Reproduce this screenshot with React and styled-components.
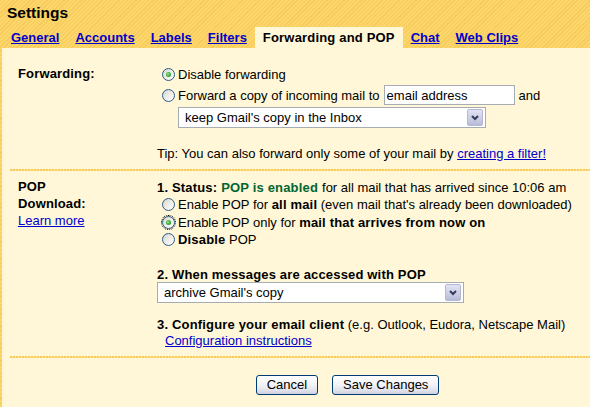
import React from 'react';
import styled, { createGlobalStyle, css } from 'styled-components';

const Global = createGlobalStyle`
  html, body { margin: 0; padding: 0; }
  body {
    font-family: "Liberation Sans", Arial, sans-serif;
    font-size: 13px;
    color: #000;
    overflow: hidden;
  }
`;

const Page = styled.div`
  min-height: 100vh;
  display: flex;
  flex-direction: column;
  background-color: #fbd266;
  background-image: repeating-linear-gradient(-45deg, #fcd56b 0px, #fcd56b 2px, #f6ca5b 2px, #f6ca5b 3px);
`;

const Title = styled.h1`
  margin: 0;
  padding: 3px 7px 4px;
  font-size: 15.5px;
  line-height: 20px;
  font-weight: bold;
`;

const TabBar = styled.nav`
  display: flex;
  height: 21px;
  padding-left: 3px;
`;

const Tab = styled.a`
  padding: 0 8px;
  line-height: 21px;
  font-weight: bold;
  letter-spacing: ${p => (p.$active ? '0.18px' : '0')};
  white-space: nowrap;
  color: ${p => (p.$active ? '#000' : '#0000cc')};
  text-decoration: ${p => (p.$active ? 'none' : 'underline')};
  background: ${p => (p.$active ? '#fff7d7' : 'transparent')};
`;

const Panel = styled.main`
  flex: 1;
  margin-left: 2px;
  padding-left: 8px;
  background: #fff7d7;
`;

const Section = styled.section`
  display: grid;
  grid-template-columns: 147px 1fr;
  padding: ${p => p.$pad};
`;

const Label = styled.div`
  width: 92px;
  padding-left: 8px;
  font-weight: bold;
  letter-spacing: 0.15px;
  line-height: 17px;
`;

const Link = styled.a`
  color: #0000cc;
  text-decoration: underline;
  font-weight: normal;
  letter-spacing: 0;
  cursor: pointer;
`;

const Column = styled.div`
  display: flex;
  flex-direction: column;
  align-items: flex-start;
`;

const Line = styled.div`
  display: flex;
  align-items: center;
  white-space: nowrap;
  height: ${p => p.$h || 18}px;
  margin-top: ${p => p.$mt || 0}px;
  padding-left: ${p => p.$indent || 0}px;
`;

const Heading = styled.b`
  font-weight: bold;
  letter-spacing: 0.17px;
`;

const Green = styled.b`
  color: #006633;
  font-weight: bold;
  letter-spacing: 0.17px;
  margin-left: 4px;
  margin-right: 4px;
`;

const Radio = styled.span`
  position: relative;
  flex: none;
  box-sizing: border-box;
  width: 13px;
  height: 13px;
  margin: 0 3px 0 5px;
  border-radius: 50%;
  border: 1px solid #2a5d8c;
  background: linear-gradient(135deg, #d6d3cb 0%, #ecebe6 45%, #ffffff 100%);
  ${p => p.$focus && css`
    outline: 1px dotted #000;
    outline-offset: 0px;
  `}
  ${p => p.$checked && css`
    &::after {
      content: '';
      position: absolute;
      left: 3px;
      top: 3px;
      width: 5px;
      height: 5px;
      border-radius: 50%;
      background: radial-gradient(circle at 40% 40%, #a8e6a0 0%, #3fb23a 45%, #1c8a1c 100%);
    }
  `}
`;

const TextField = styled.input`
  box-sizing: border-box;
  width: 131px;
  height: 20px;
  margin: 0 4px;
  padding: 0 2px;
  border: 1px solid #a5acb2;
  background: #fff;
  font: 13px "Liberation Sans", Arial, sans-serif;
  color: #000;
  outline: none;
`;

const Select = styled.div`
  box-sizing: border-box;
  display: flex;
  align-items: center;
  justify-content: space-between;
  width: ${p => p.$w}px;
  height: 21px;
  margin-left: ${p => p.$indent || 0}px;
  margin-top: ${p => p.$mt || 0}px;
  padding: 0 2px 0 6px;
  border: 1px solid #a5acb2;
  background: #fff;
  white-space: nowrap;
`;

const DropButton = styled.span`
  box-sizing: border-box;
  display: flex;
  align-items: center;
  justify-content: center;
  width: 16px;
  height: 17px;
  border: 1px solid #b4b8d4;
  border-radius: 2px;
  background: linear-gradient(180deg, #e2e3f2 0%, #cacde4 60%, #b7bbd7 100%);
`;

const Divider = styled.div`
  height: 2px;
  background-image: repeating-linear-gradient(90deg, #f8cc58 0px, #f8cc58 2px, #fde39a 2px, #fde39a 3px);
`;

const Actions = styled.div`
  display: flex;
  justify-content: center;
  gap: 14px;
  padding: 17px 0 0 95px;
`;

const Button = styled.button`
  box-sizing: border-box;
  height: 20px;
  padding: 0 10px;
  border: 1px solid #003c74;
  border-radius: 3px;
  background: linear-gradient(180deg, #ffffff 0%, #f4f4f8 45%, #e2e2ec 80%, #cfcfe0 100%);
  font: 13px "Liberation Sans", Arial, sans-serif;
  color: #000;
  line-height: 18px;
`;

const Chevron = () => (
  <svg width="10" height="8" viewBox="0 0 10 8">
    <polyline points="2,2 5,5 8,2" fill="none" stroke="#333c5a" strokeWidth="2" />
  </svg>
);

const FakeSelect = ({ children, ...rest }) => (
  <Select {...rest}>
    <span>{children}</span>
    <DropButton><Chevron /></DropButton>
  </Select>
);

const tabs = ['General', 'Accounts', 'Labels', 'Filters', 'Forwarding and POP', 'Chat', 'Web Clips'];

export default function App() {
  return (
    <Page>
      <Global />
      <Title>Settings</Title>
      <TabBar>
        {tabs.map(t => (
          <Tab key={t} $active={t === 'Forwarding and POP'}>{t}</Tab>
        ))}
      </TabBar>
      <Panel>
        <Section $pad="17px 0 7px">
          <Label>Forwarding:</Label>
          <Column>
            <Line>
              <Radio $checked />Disable forwarding
            </Line>
            <Line $h={22} $mt={1}>
              <Radio />Forward a copy of incoming mail to
              <TextField readOnly defaultValue="email address" />
              and
            </Line>
            <FakeSelect $w={308} $indent={21} $mt={1}>keep Gmail's copy in the Inbox</FakeSelect>
            <Line $mt={16}>
              Tip: You can also forward only some of your mail by&nbsp;<Link>creating a filter!</Link>
            </Line>
          </Column>
        </Section>
        <Divider />
        <Section $pad="7px 0 8px">
          <Label>
            POP Download:
            <br />
            <Link>Learn more</Link>
          </Label>
          <Column>
            <Line>
              <Heading>1. Status:</Heading>
              <Green>POP is enabled</Green>
              for all mail that has arrived since 10:06 am
            </Line>
            <Line $h={17.5}>
              <Radio />Enable POP for&nbsp;<Heading>all mail</Heading>&nbsp;(even mail that's already been downloaded)
            </Line>
            <Line $h={17.5}>
              <Radio $checked $focus />Enable POP only for&nbsp;<Heading>mail that arrives from now on</Heading>
            </Line>
            <Line $h={17.5}>
              <Radio /><Heading>Disable</Heading>&nbsp;POP
            </Line>
            <Line $h={15} $mt={18.5}>
              <Heading>2. When messages are accessed with POP</Heading>
            </Line>
            <FakeSelect $w={307}>archive Gmail's copy</FakeSelect>
            <Line $h={16} $mt={13}>
              <Heading>3. Configure your email client</Heading>&nbsp;(e.g. Outlook, Eudora, Netscape Mail)
            </Line>
            <Line $h={16} $indent={8}>
              <Link>Configuration instructions</Link>
            </Line>
          </Column>
        </Section>
        <Divider />
        <Actions>
          <Button>Cancel</Button>
          <Button>Save Changes</Button>
        </Actions>
      </Panel>
    </Page>
  );
}
